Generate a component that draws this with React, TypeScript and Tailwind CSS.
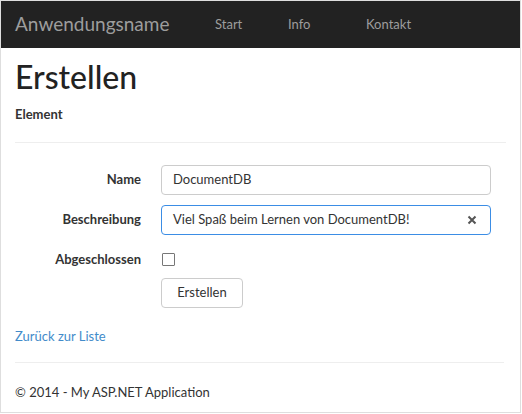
import React from 'react';

const font = { fontFamily: '"Lato", "Noto Sans", sans-serif' };

export default function App() {
  return (
    <div
      className="w-[521px] h-[413px] border border-[#dedede] bg-white text-[#333] overflow-hidden"
      style={font}
    >
      {/* Navbar */}
      <div className="h-[47px] bg-[#222] flex items-center pl-[14px]">
        <span className="text-[19px] text-[#9d9d9d] w-[200px]">Anwendungsname</span>
        <nav className="flex items-center text-[13px] text-[#9d9d9d]">
          <span className="w-[73px]">Start</span>
          <span className="w-[78px]">Info</span>
          <span>Kontakt</span>
        </nav>
      </div>

      <div className="px-[14px]">
        <h2 className="text-[32px] leading-[40px] mt-[9px] font-medium text-[#222]">Erstellen</h2>
        <h4 className="text-[13px] font-bold mt-[8px] leading-[18px]">Element</h4>
        <hr className="mt-[19px] border-[#eee]" />

        <div className="grid grid-cols-[126px_330px] gap-x-[20px] gap-y-[10px] mt-[22px] text-[13px] items-center">
          <label className="text-right font-bold">Name</label>
          <div className="h-[30px] border border-[#ccc] rounded-[4px] flex items-center px-[11px]">
            DocumentDB
          </div>

          <label className="text-right font-bold">Beschreibung</label>
          <div className="h-[30px] border border-[#3b8de5] rounded-[4px] flex items-center justify-between pl-[11px] pr-[13px]">
            <span>Viel Spaß beim Lernen von DocumentDB!</span>
            <svg width="10" height="10" viewBox="0 0 10 10">
              <path d="M1.5 1.5 L8.5 8.5 M8.5 1.5 L1.5 8.5" stroke="#555" strokeWidth="2" />
            </svg>
          </div>

          <label className="text-right font-bold mt-[7px] leading-[14px]">Abgeschlossen</label>
          <div className="mt-[7px] h-[14px] flex items-center">
            <span className="ml-[1px] w-[13px] h-[13px] border border-[#777] rounded-[1px] bg-white" />
          </div>

          <div />
          <div className="mt-[2px]">
            <button className="h-[30px] w-[82px] border border-[#ccc] rounded-[4px] bg-white text-[13px]">
              Erstellen
            </button>
          </div>
        </div>

        <a className="block mt-[19px] text-[13px] text-[#428bca] leading-[18px]">Zurück zur Liste</a>
        <hr className="mt-[17px] mr-[2px] border-[#eee]" />
        <footer className="mt-[20px] text-[13px] leading-[18px]">© 2014 - My ASP.NET Application</footer>
      </div>
    </div>
  );
}
